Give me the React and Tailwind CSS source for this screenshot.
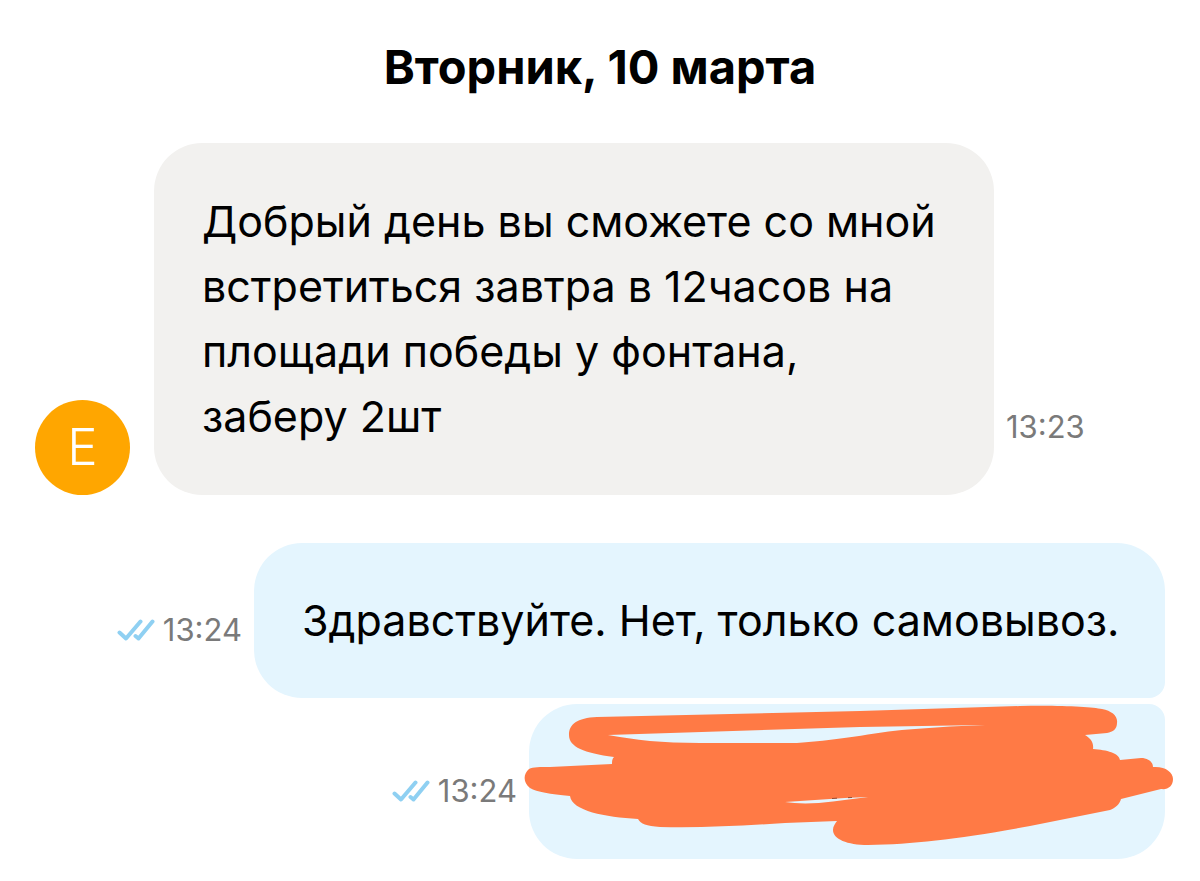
function DoubleCheck() {
  return (
    <svg
      viewBox="0 0 38 22"
      className="h-[22px] w-[38px] shrink-0"
      fill="none"
      stroke="#8fd0f2"
      strokeWidth="4"
      strokeLinecap="round"
      strokeLinejoin="round"
      role="img"
      aria-label="Прочитано"
    >
      <path d="M2.5 13.5 L9 19.5 L23.5 2.5" />
      <path d="M18.5 17 L21.5 19.5 L35.5 2.5" />
    </svg>
  );
}

function Time({ value, read }) {
  return (
    <div className="flex h-12 shrink-0 items-center gap-2 text-[31px] leading-12 text-[#7a7a7a]">
      {read && <DoubleCheck />}
      <time dateTime={value}>{value}</time>
    </div>
  );
}

function Scribble() {
  return (
    <svg
      viewBox="520 700 660 150"
      className="absolute -top-1 -left-[9px] h-[150px] w-[660px]"
      aria-hidden="true"
    >
      <path
        fill="#ff7a45"
        fillRule="evenodd"
        d="M569 735 C569 724 577 718 597 717 L860 711 L1020 706 C1060 705 1092 707 1102 709 C1112 711 1118 716 1117 723 C1117 729 1113 732 1107 733 L1085 735 C1090 738 1094 742 1093 749 C1107 750 1119 753 1120 760 L1141 758 C1148 758 1153 762 1153 767 C1165 766 1173 772 1173 779 C1173 786 1168 790 1161 789 L1121 799 C1120 804 1115 808 1110 810 L1030 826 C960 839 915 844 868 845 C847 845 833 839 833 830 C833 826 835 824 837 821 L785 823 C740 826 700 828 660 827 C646 826 641 824 638 819 C605 817 572 811 570 796 C550 794 537 792 530 788 C523 783 523 774 529 769 C533 767 540 767 550 767 L612 764 C612 761 612 759 614 757 C584 753 569 747 569 735 Z M608 735 C635 740 662 743 700 743 L797 743 C845 740 880 731 915 729 Q950 726 985 725 L860 727 Z M785 802 C797 804 815 804 833 801.500 L868 797 L845 798 Z"
      />
      <path
        d="M832 798.500 L837 798.200 M848 797.700 L852 797.500"
        stroke="#7a3a25"
        strokeWidth="0.800"
      />
    </svg>
  );
}

export default function App() {
  return (
    <main className="bg-white pt-[34px] pr-[35px] pb-[22px] pl-[35px] font-['Inter',sans-serif] text-black">
      <h1 className="text-center text-[47px] leading-[65px] font-bold">
        Вторник, 10 марта
      </h1>

      <section className="mt-11 flex flex-col">
        <article className="flex items-end">
          <div className="mr-6 flex size-[95px] shrink-0 items-center justify-center rounded-full bg-[#ffa600] text-[51px] font-light text-white">
            Е
          </div>
          <p className="w-full max-w-[840px] rounded-[48px] bg-[#f2f1ef] py-[46px] pr-10 pl-12 text-[43px] leading-[65px]">
            Добрый день вы сможете со мной
            <br />
            встретиться завтра в 12часов на
            <br />
            площади победы у фонтана,
            <br />
            заберу 2шт
          </p>
          <div className="mb-11 ml-3">
            <Time value="13:23" />
          </div>
        </article>

        <article className="mt-12 flex items-end justify-end">
          <div className="mr-3 mb-11">
            <Time value="13:24" read />
          </div>
          <p className="w-full max-w-[911px] rounded-[48px] rounded-br-[16px] bg-[#e4f5fe] py-[45px] pr-10 pl-12 text-[43px] leading-[65px]">
            Здравствуйте. Нет, только самовывоз.
          </p>
        </article>

        <article className="mt-1.5 flex items-end justify-end">
          <div className="mr-3 mb-11">
            <Time value="13:24" read />
          </div>
          <div className="relative h-[155px] w-full max-w-[636px] rounded-[48px] rounded-tr-[16px] bg-[#e4f5fe]">
            <Scribble />
          </div>
        </article>
      </section>
    </main>
  );
}
